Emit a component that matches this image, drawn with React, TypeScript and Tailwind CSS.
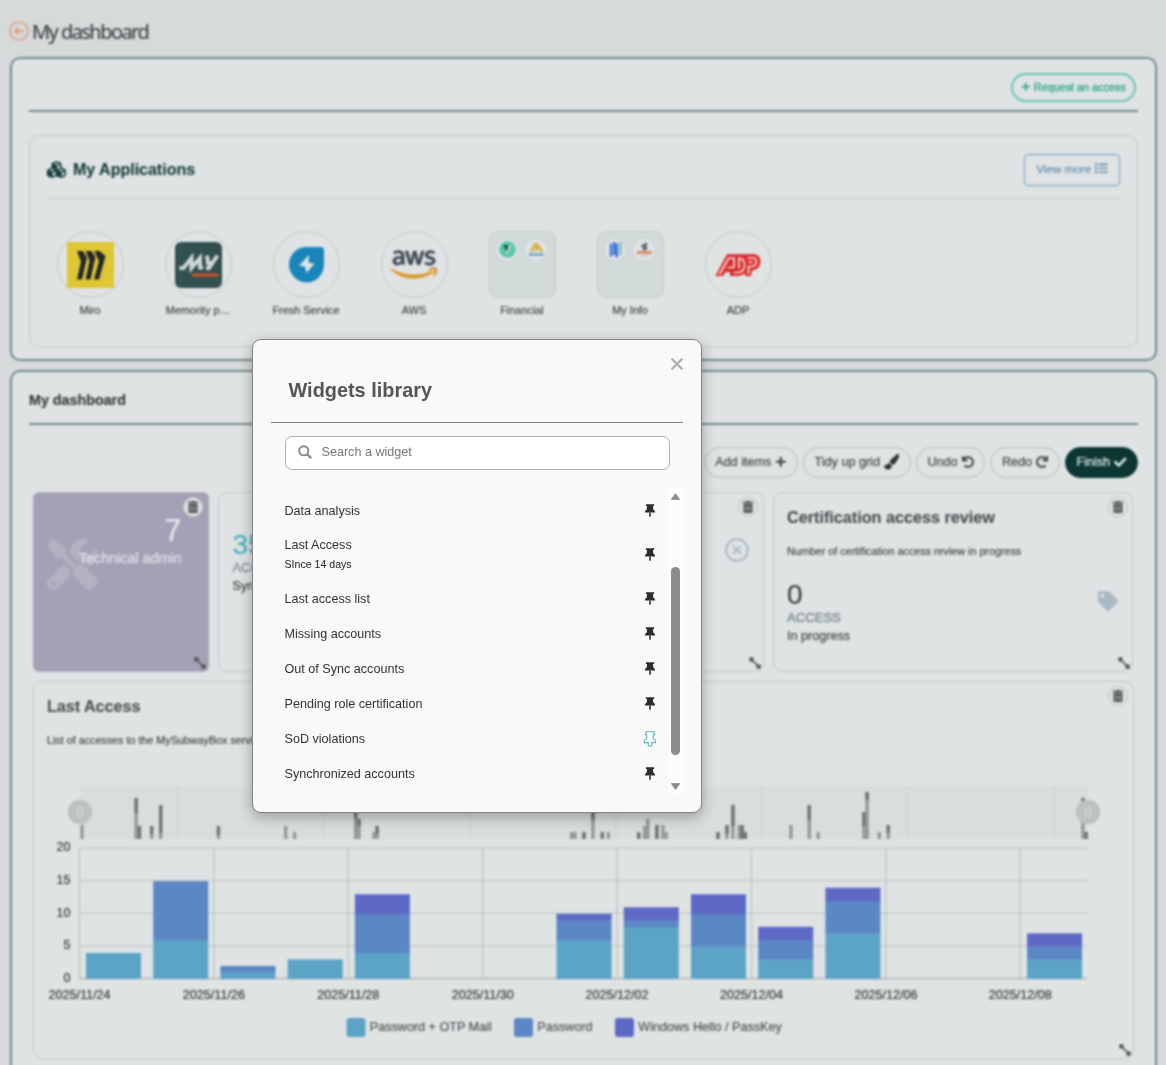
import React from "react";
import {
  FaAws,
  FaCheck,
  FaList,
  FaPaintBrush,
  FaPlus,
  FaRedo,
  FaTag,
  FaTools,
  FaTrashAlt,
  FaUndo,
} from "react-icons/fa";
import { FaCubes } from "react-icons/fa6";
import { CircleX } from "lucide-react";

function MiroLogo() {
  return (
    <svg width="47" height="46" viewBox="0 0 47 46">
      <rect width="47" height="46" fill="#dfc733" />
      <g fill="#20262a">
        <path d="M10 9h6l4 7-5 21.500h-5l4-18z" />
        <path d="M18.700 9h5.800l4 6-5 22.500h-5l4-18.500z" />
        <path d="M27.200 9h5.300l6 5-6.500 23.500h-5l5-18.500z" />
      </g>
    </svg>
  );
}

function MemorityLogo() {
  return (
    <svg width="47" height="46" viewBox="0 0 47 46">
      <rect width="47" height="46" rx="6" fill="#31504f" />
      <path
        d="M4.500 26h4L16.500 16v10L25 16v9.500h3M32 13.500l1 7.500h4M42.500 13.500L34 26h-3"
        fill="none"
        stroke="#d3d6d6"
        strokeWidth="3.900"
      />
      <path d="M17 33h26.500" stroke="#b9542a" strokeWidth="3.600" />
    </svg>
  );
}

function FreshLogo() {
  return (
    <svg width="35" height="36" viewBox="0 0 35 36">
      <path d="M17.500 0H31.500Q35 0 35 3.500V18A17.500 17.700 0 1 1 17.500 0Z" fill="#1a85bb" />
      <path d="M20 8L10 18.700l6 .8 1.500 6.500 8-9.500-6-.8z" fill="#dfe6ea" />
    </svg>
  );
}

function AwsLogo() {
  return (
    <>
      <svg width="0" height="0" className="absolute">
        <defs>
          <linearGradient id="awsTone" x1="0" y1="0" x2="0" y2="1">
            <stop offset="0.620" stopColor="#3b4650" />
            <stop offset="0.620" stopColor="#dd962b" />
          </linearGradient>
        </defs>
      </svg>
      <FaAws className="h-[37px] w-[46px] overflow-visible fill-[url(#awsTone)] stroke-[url(#awsTone)]" strokeWidth={11} />
    </>
  );
}

function AdpLogo() {
  return (
    <svg width="48" height="26" viewBox="0 0 48 26" className="overflow-visible">
      <path
        d="M1.500 24H9L11.500 20H16V24H24Q28 24 31.300 21L31 24H37L38 18.500Q46 17.500 46.500 10Q46.500 3 40 2.300H13Z"
        fill="#e02525"
      />
      <g fill="none" stroke="#e8ecec" strokeWidth="1.700">
        <path d="M5.500 22.500L14.800 6H20V15.500H13.500" />
        <path d="M19.500 20.500H24.500Q30.300 19.500 30.500 13.500Q30.500 6.500 25 6V16.500" />
        <path d="M33.500 6H39Q42.500 6.500 42.500 10Q42 14 38 14.500H34.500V22" />
        <path d="M34.500 10.200H38.500" />
      </g>
    </svg>
  );
}

function MiniDot({ children }: { children: React.ReactNode }) {
  return (
    <span className="flex size-[24px] items-center justify-center rounded-full border border-[#ccd2d2] bg-[#dfe3e4]">
      {children}
    </span>
  );
}

function FinancialFolder() {
  return (
    <div className="flex h-[67px] w-[67px] gap-[5px] rounded-[9px] border-[1.5px] border-[#c5cccc] bg-[#d3dada] px-[5.500px] pt-[6px]">
      <MiniDot>
        <svg width="17" height="17" viewBox="0 0 17 17">
          <circle cx="8.500" cy="8.500" r="8.300" fill="#4fcba8" />
          <path d="M4 4h5v3l-1 3-2-2z" fill="#25545a" />
          <path d="M11.500 4L8 13.500" stroke="#b7c5c5" strokeWidth="2.600" />
        </svg>
      </MiniDot>
      <MiniDot>
        <svg width="17" height="15" viewBox="0 0 17 15">
          <path d="M3 9.500L7 2.500h2l5 7M7.500 9l1.500-4" fill="none" stroke="#d3a92c" strokeWidth="2.400" />
          <path d="M1 12.500h15" stroke="#3f90c0" strokeWidth="2" strokeDasharray="4 .6" />
        </svg>
      </MiniDot>
    </div>
  );
}

function InfoFolder() {
  return (
    <div className="flex h-[67px] w-[67px] gap-[5px] rounded-[9px] border-[1.5px] border-[#c5cccc] bg-[#d3dada] px-[5.500px] pt-[6px]">
      <MiniDot>
        <svg width="15" height="17" viewBox="0 0 15 17">
          <path d="M3 2.500v13M6.200 1v13M8.800 2.500v14" stroke="#4678dc" strokeWidth="2.600" />
          <path d="M12.500 1v13" stroke="#7cc3b4" strokeWidth="2.400" />
        </svg>
      </MiniDot>
      <MiniDot>
        <svg width="17" height="16" viewBox="0 0 17 16">
          <path d="M11 1.500L7 4l3 2-3 2" fill="none" stroke="#4f5f6e" strokeWidth="2.600" />
          <path d="M1 10.500h15" stroke="#dd7d50" strokeWidth="3.200" strokeDasharray="3 .5" />
          <path d="M4 14h9" stroke="#b9bfc1" strokeWidth="1" />
        </svg>
      </MiniDot>
    </div>
  );
}

const apps: { name: string; logo: React.ReactNode; folder?: boolean }[] = [
  { name: "Miro", logo: <MiroLogo /> },
  { name: "Memority p…", logo: <MemorityLogo /> },
  { name: "Fresh Service", logo: <FreshLogo /> },
  { name: "AWS", logo: <AwsLogo /> },
  { name: "Financial", logo: <FinancialFolder />, folder: true },
  { name: "My Info", logo: <InfoFolder />, folder: true },
  { name: "ADP", logo: <AdpLogo /> },
];

function TrashBadge({ className }: { className: string }) {
  return (
    <span
      className={`absolute flex size-5 items-center justify-center rounded-full border-[1.5px] border-[#bac1c1] bg-[#dfe3e4] text-[#454a4b] ${className}`}
    >
      <FaTrashAlt className="mb-px size-[12px]" />
    </span>
  );
}

function ResizeMark({ className }: { className: string }) {
  return (
    <svg width="12" height="12" viewBox="0 0 12 12" className={`absolute ${className}`}>
      <path d="M2 2l8 8" stroke="#4f5555" strokeWidth="1.600" />
      <rect x="0.300" y="0.300" width="4.200" height="4.200" rx="0.800" fill="#4f5555" />
      <rect x="7.500" y="7.500" width="4.200" height="4.200" rx="0.800" fill="#4f5555" />
    </svg>
  );
}

function PillButton({ label, icon, className }: { label: string; icon: React.ReactNode; className: string }) {
  return (
    <button
      className={`flex h-[31px] items-center justify-center gap-[4px] rounded-full border-[1.5px] text-[12.600px] ${className}`}
    >
      {label}
      {icon}
    </button>
  );
}

const days: { slot: number; values: [number, number, number] }[] = [
  { slot: 0, values: [4, 0, 0] },
  { slot: 1, values: [6, 9, 0] },
  { slot: 2, values: [1, 1, 0] },
  { slot: 3, values: [3, 0, 0] },
  { slot: 4, values: [4, 6, 3] },
  { slot: 7, values: [6, 3, 1] },
  { slot: 8, values: [8, 1, 2] },
  { slot: 9, values: [5, 5, 3] },
  { slot: 10, values: [3, 3, 2] },
  { slot: 11, values: [7, 5, 2] },
  { slot: 14, values: [3, 2, 2] },
];
const tones = ["#5ca4c5", "#5b87c5", "#5d69c5"];
const dateTicks = [
  "2025/11/24",
  "2025/11/26",
  "2025/11/28",
  "2025/11/30",
  "2025/12/02",
  "2025/12/04",
  "2025/12/06",
  "2025/12/08",
];

/* Overview strip: x, total height, height of the dark upper part */
const strip: [number, number, number][] = [
  [80.3, 14, 0], [134.5, 41, 15], [137.800, 13, 13], [150, 13, 8], [159, 34, 28], [216.800, 13, 9],
  [284, 13, 0], [293, 7, 0], [354, 40, 20], [357.300, 20, 7], [372.300, 7, 0], [375.500, 13, 8],
  [570, 7, 0], [573.300, 7, 0], [582.300, 7, 7], [591.300, 40, 21], [600.700, 7, 7], [606.700, 7, 0],
  [637, 7, 7], [643, 13, 0], [646.200, 20, 0], [655.200, 14, 14], [661.300, 14, 0], [664.600, 7, 0],
  [716.300, 7, 7], [725.300, 14, 9], [731.300, 34, 21], [737.600, 14, 0], [740.500, 14, 14], [743.700, 7, 7],
  [789.300, 14, 0], [807.600, 34, 15], [816.600, 7, 0], [862.300, 27, 14], [865.500, 47, 8], [877.600, 7, 0],
  [886.600, 14, 8], [1081.300, 41, 3], [1084.500, 7, 7],
];

function AccessChart() {
  return (
    <svg
      width="1098"
      height="270"
      viewBox="35 780 1098 270"
      fontFamily="Liberation Sans, Arial, sans-serif"
      fontSize="12.600"
      className="block"
    >
      <rect x="80" y="786" width="1008" height="53" fill="#d9dddd" />
      {[177, 323, 469.5, 616, 762, 907, 1054].map((x) => (
        <path key={x} d={`M${x} 786v53`} stroke="#ccd1d1" />
      ))}
      {strip.map(([x, h, d]) => (
        <g key={x}>
          <rect x={x} y={839 - h} width="3.300" height={h} fill="#929797" />
          <rect x={x} y={839 - h} width="3.300" height={d} fill="#6e7373" />
        </g>
      ))}
      {[80, 1088].map((x) => (
        <g key={x}>
          <circle cx={x} cy="812" r="12.200" fill="#bcc1c1" />
          <path d={`M${x - 2} 806.500v11M${x + 2} 806.500v11`} stroke="#d6dbdb" strokeWidth="1.400" />
        </g>
      ))}
      {[0, 5, 10, 15, 20].map((v) => (
        <g key={v}>
          <path d={`M79 ${978.5 - v * 6.52}H1087`} stroke={v === 0 ? "#aeb5b5" : "#c0c6c6"} strokeWidth="1.300" />
          <text x="70.500" y={981.800 - v * 6.520} textAnchor="end" fill="#333839" stroke="#333839" strokeWidth="0.200">
            {v}
          </text>
        </g>
      ))}
      {dateTicks.map((t, i) => (
        <g key={t}>
          <path d={`M${79.5 + i * 134.4} 848V978`} stroke="#bec4c4" strokeWidth="1.300" />
          <text
            x={79.500 + i * 134.400}
            y="998.500"
            textAnchor="middle"
            fill="#333839"
            stroke="#333839"
            strokeWidth="0.200"
          >
            {t}
          </text>
        </g>
      ))}
      {days.map(({ slot, values }) => {
        let base = 0;
        return values.map((v, k) => {
          base += v;
          return (
            <rect
              key={`${slot}-${k}`}
              x={86 + slot * 67.22}
              y={979 - base * 6.52}
              width="55"
              height={v * 6.52 + (k > 0 && v > 0 ? 0.3 : 0)}
              fill={tones[k]}
            />
          );
        });
      })}
      {[
        [346.5, "Password + OTP Mail"],
        [514, "Password"],
        [615, "Windows Hello / PassKey"],
      ].map(([x, label], k) => (
        <g key={label}>
          <rect x={x} y="1018" width="19" height="19" rx="3" fill={tones[k]} />
          <text x={Number(x) + 23.300} y="1031" fill="#4a4f50" stroke="#4a4f50" strokeWidth="0.150">
            {label}
          </text>
        </g>
      ))}
    </svg>
  );
}

const widgets: { name: string; note?: string; unpinned?: boolean }[] = [
  { name: "Data analysis" },
  { name: "Last Access", note: "SInce 14 days" },
  { name: "Last access list" },
  { name: "Missing accounts" },
  { name: "Out of Sync accounts" },
  { name: "Pending role certification" },
  { name: "SoD violations", unpinned: true },
  { name: "Synchronized accounts" },
];

function Pin({ outlined }: { outlined?: boolean }) {
  return outlined ? (
    <svg width="14" height="16" viewBox="0 0 14 16" fill="#fdffff" stroke="#56b4c3" strokeWidth="1.100" strokeLinejoin="round">
      <path d="M2.700 0.800H11.300V3.600H10.300V7.400L12.600 9.600V11.600H8.700V14.600L7 15.300L5.300 14.600V11.600H1.400V9.600L3.700 7.400V3.600H2.700Z" />
    </svg>
  ) : (
    <svg width="14" height="16" viewBox="0 0 14 16" fill="#2d2d2d" className="mb-px">
      <path d="M2.900 1.200H11.100V2.900H9.900L10.300 6.500Q12.100 7.500 12.200 9.400H1.800Q1.900 7.500 3.700 6.500L4.100 2.900H2.900Z" />
      <path d="M6.200 9.400H7.800V12.600L7.400 14H6.600L6.200 12.600Z" />
    </svg>
  );
}

function WidgetsLibrary() {
  return (
    <div className="absolute left-[252px] top-[339px] flex h-[474px] w-[450px] flex-col rounded-[9px] border border-[#858585] bg-[#f9f9f9] px-[18px] shadow-[0_4px_14px_rgba(0,0,0,0.3)]">
      <div className="flex h-[83px] items-start justify-between border-b border-[#858585] pl-[17.500px]">
        <h2 className="mt-[36px] text-[19.900px] leading-7 font-bold text-[#555]">Widgets library</h2>
        <svg width="12" height="12" viewBox="0 0 12 12" className="mt-[18px]">
          <path d="M1.300 1.300l9.400 9.400M10.700 1.300l-9.400 9.400" stroke="#b3b3b3" strokeWidth="2.400" strokeLinecap="round" />
        </svg>
      </div>
      <label className="mx-[14px] mt-[13px] flex h-[34px] w-[385px] shrink-0 items-center rounded-[7px] border border-[#b0b0b0] bg-white pl-3 text-[12.600px] text-[#777]">
        <svg width="14" height="14" viewBox="0 0 14 14" className="mr-[9.500px] -mt-[2px]" fill="none" stroke="#868686" strokeWidth="1.900">
          <circle cx="5.800" cy="5.800" r="4.600" />
          <path d="M9 9l4.200 4.200" strokeWidth="2.200" />
        </svg>
        <span className="-mt-[2px]">Search a widget</span>
      </label>
      <div className="mt-[18px] flex h-[306px]">
        <ul className="flex w-[397px] flex-col pt-[5.500px] pr-[11px] pl-[13.500px] text-[12.600px] text-[#333]">
          {widgets.map((w) => (
            <li key={w.name} className={`flex items-center justify-between ${w.note ? "h-[53px]" : "h-[35px]"}`}>
              <div className="flex flex-col">
                <span className="leading-[19px]">{w.name}</span>
                {w.note && <span className="text-[10.600px] leading-[19px] text-[#222]">{w.note}</span>}
              </div>
              <Pin outlined={w.unpinned} />
            </li>
          ))}
        </ul>
        <div className="flex w-[15px] flex-col items-center bg-[#fcfcfc] pt-[5px] pb-1">
          <svg width="9" height="7" viewBox="0 0 9 7">
            <path d="M4.500 0.500L9 6.800H0z" fill="#8b8b8b" stroke="#8b8b8b" strokeWidth="0.500" strokeLinejoin="round" />
          </svg>
          <div className="mt-[67px] h-[188px] w-[9px] rounded-full bg-[#8b8b8b]" />
          <svg width="9" height="7" viewBox="0 0 9 7" className="mt-auto">
            <path d="M4.500 6.800L9 0.300H0z" fill="#8b8b8b" stroke="#8b8b8b" strokeWidth="0.500" strokeLinejoin="round" />
          </svg>
        </div>
      </div>
    </div>
  );
}

export default function App() {
  return (
    <div className="relative h-[1065px] w-[1166px] overflow-hidden bg-[#d6dadb] font-['Liberation_Sans',Arial,sans-serif]">
      <div className="flex h-[1120px] flex-col pl-[10px] text-[#3c4142] [filter:blur(0.8px)] [-webkit-text-stroke:0.150px]">
        <header className="-ml-px flex h-[57px] items-center">
          <svg width="20" height="20" viewBox="0 0 20 20" className="mt-[4px]" fill="none" stroke="#e0a183" strokeWidth="1.700">
            <circle cx="10" cy="10" r="9" />
            <path d="M14.500 10H6M9.500 6.500L6 10l3.500 3.500" stroke="#e08a60" strokeWidth="1.400" />
          </svg>
          <h1 className="mt-[7px] ml-[3px] font-['Noto_Sans',sans-serif] text-[20px] tracking-[-1.550px]">My dashboard</h1>
        </header>

        <section className="flex h-[304px] w-[1147px] shrink-0 flex-col rounded-[10px] border-2 border-[#6f8a88] bg-[#dfe3e4] px-[17px]">
          <div className="flex h-[53px] shrink-0 items-center justify-end border-b-2 border-[#6f8a88]">
            <button className="mt-[5px] mr-[2px] flex h-[29px] w-[125px] items-center justify-center gap-[3px] rounded-full border-2 border-[#6cc5b0] text-[10.800px] text-[#35aa8e] [-webkit-text-stroke:0.400px]">
              <FaPlus className="size-[9.500px]" />
              Request an access
            </button>
          </div>
          <div className="mt-[22.500px] flex h-[212px] w-full flex-col rounded-[10px] border-[1.5px] border-[#c2c9c9] px-[17px]">
            <div className="flex h-[63px] shrink-0 items-center border-b-[1.5px] border-[#c2c9c9]">
              <FaCubes className="mt-[5px] size-[19px] text-[#173f3c]" />
              <h2 className="mt-[6px] ml-[7px] text-[16px] font-bold text-[#1a403e]">My Applications</h2>
              <button className="mt-[6px] ml-auto flex h-[32px] w-[96px] items-center justify-center gap-1 rounded-[4px] border-[1.5px] border-[#759bbb] pb-[2px] text-[11.700px] text-[#6689ae]">
                View more
                <FaList className="size-[12.500px]" />
              </button>
            </div>
            <div className="-ml-[11px] flex pt-[32px]">
              {apps.map((app) => (
                <div key={app.name} className="flex w-[108px] flex-col items-center">
                  {app.folder ? (
                    app.logo
                  ) : (
                    <div className="flex size-[67px] items-center justify-center rounded-full border-[1.5px] border-[#c2c9c9] pt-px">
                      {app.logo}
                    </div>
                  )}
                  <span className="mt-[4px] text-[10.900px] leading-4">{app.name}</span>
                </div>
              ))}
            </div>
          </div>
        </section>

        <section className="mt-[9px] flex h-[740px] w-[1147px] shrink-0 flex-col rounded-[10px] border-2 border-[#6f8a88] bg-[#dfe3e4] px-[17px]">
          <div className="flex h-[53px] shrink-0 items-center border-b-2 border-[#6f8a88]">
            <h2 className="mt-[7px] text-[14.300px] font-bold text-[#34393a]">My dashboard</h2>
          </div>
          <div className="mt-[22px] flex shrink-0 justify-end gap-[5px]">
            <PillButton label="Add items" icon={<FaPlus className="-mt-px size-[11.500px]" />} className="w-[94px] border-[#b3baba]" />
            <PillButton label="Tidy up grid" icon={<FaPaintBrush className="-mt-px size-[15.500px] text-[#2c3030]" />} className="w-[108px] border-[#b3baba]" />
            <PillButton label="Undo" icon={<FaUndo className="-mt-px size-[12px] stroke-[10]" />} className="w-[69px] border-[#b3baba]" />
            <PillButton label="Redo" icon={<FaRedo className="-mt-px size-[12px] stroke-[10]" />} className="w-[70px] border-[#b3baba]" />
            <PillButton label="Finish" icon={<FaCheck className="-mt-px size-[12.500px]" />} className="w-[73px] border-[#0c3633] bg-[#0c3633] text-[#e6eeed]" />
          </div>

          <div className="mt-[14px] ml-1 flex h-[180px] shrink-0 gap-[9px]">
            <div className="relative w-[176px] rounded-[6px] border border-[#b0adc0] bg-[#a4a1b6] text-[#e6e6ec]">
              <FaTools className="absolute top-[46px] left-[13px] size-[51px] text-[#b4b1c3]" />
              <TrashBadge className="top-[4px] right-[5px]" />
              <div className="relative flex flex-col items-end pt-[20px] pr-[26.500px]">
                <span className="text-[31px] leading-[36px]">7</span>
                <span className="text-[14.300px] leading-[18px]">Technical admin</span>
              </div>
              <ResizeMark className="right-[2px] bottom-[2px]" />
            </div>

            <div className="flex w-[176px] flex-col rounded-[9px] border-[1.5px] border-[#c2c9c9] pt-[35px] pl-[13.500px]">
              <span className="text-[28px] leading-[34px] text-[#3fb2c0]">35</span>
              <span className="text-[12.900px] leading-[12px] text-[#829194] [-webkit-text-stroke:0.300px]">ACCOUNTS</span>
              <span className="text-[12.600px] leading-[24px]">Synchronized</span>
            </div>

            <div className="relative w-[361px] rounded-[9px] border-[1.5px] border-[#c2c9c9]">
              <TrashBadge className="top-[4px] right-[5px]" />
              <CircleX className="absolute top-[44px] right-[13px] size-[26px] text-[#abbac8]" strokeWidth={1.900} />
              <ResizeMark className="right-[2px] bottom-[2px]" />
            </div>

            <div className="relative flex w-[360px] flex-col rounded-[9px] border-[1.5px] border-[#c2c9c9] pl-[13px]">
              <TrashBadge className="top-[4px] right-[4px]" />
              <h3 className="mt-[12px] text-[16.200px] leading-6 font-bold text-[#4a4f50]">Certification access review</h3>
              <p className="mt-[12px] text-[10.750px] leading-5">Number of certification access review in progress</p>
              <span className="mt-[17px] text-[28px] leading-[34px]">0</span>
              <span className="text-[13.100px] leading-[12px] text-[#829194] [-webkit-text-stroke:0.500px]">ACCESS</span>
              <span className="text-[12.600px] leading-[24px]">In progress</span>
              <FaTag className="absolute top-[98px] right-[14px] size-[20px] text-[#abb9c7]" />
              <ResizeMark className="right-[2px] bottom-[2px]" />
            </div>
          </div>

          <div className="relative mt-[9px] ml-1 flex h-[378px] w-[1101px] shrink-0 flex-col rounded-[9px] border-[1.5px] border-[#c2c9c9]">
            <TrashBadge className="top-[4px] right-[5px]" />
            <h3 className="mt-[12px] ml-[13px] text-[16.100px] leading-6 font-bold text-[#4a4f50]">Last Access</h3>
            <p className="mt-[12px] ml-[13px] text-[10.750px] leading-5">
              List of accesses to the MySubwayBox service
            </p>
            <div className="mt-[30px] ml-px">
              <AccessChart />
            </div>
            <ResizeMark className="right-[2px] bottom-[2px]" />
          </div>
        </section>
      </div>
      <WidgetsLibrary />
    </div>
  );
}
